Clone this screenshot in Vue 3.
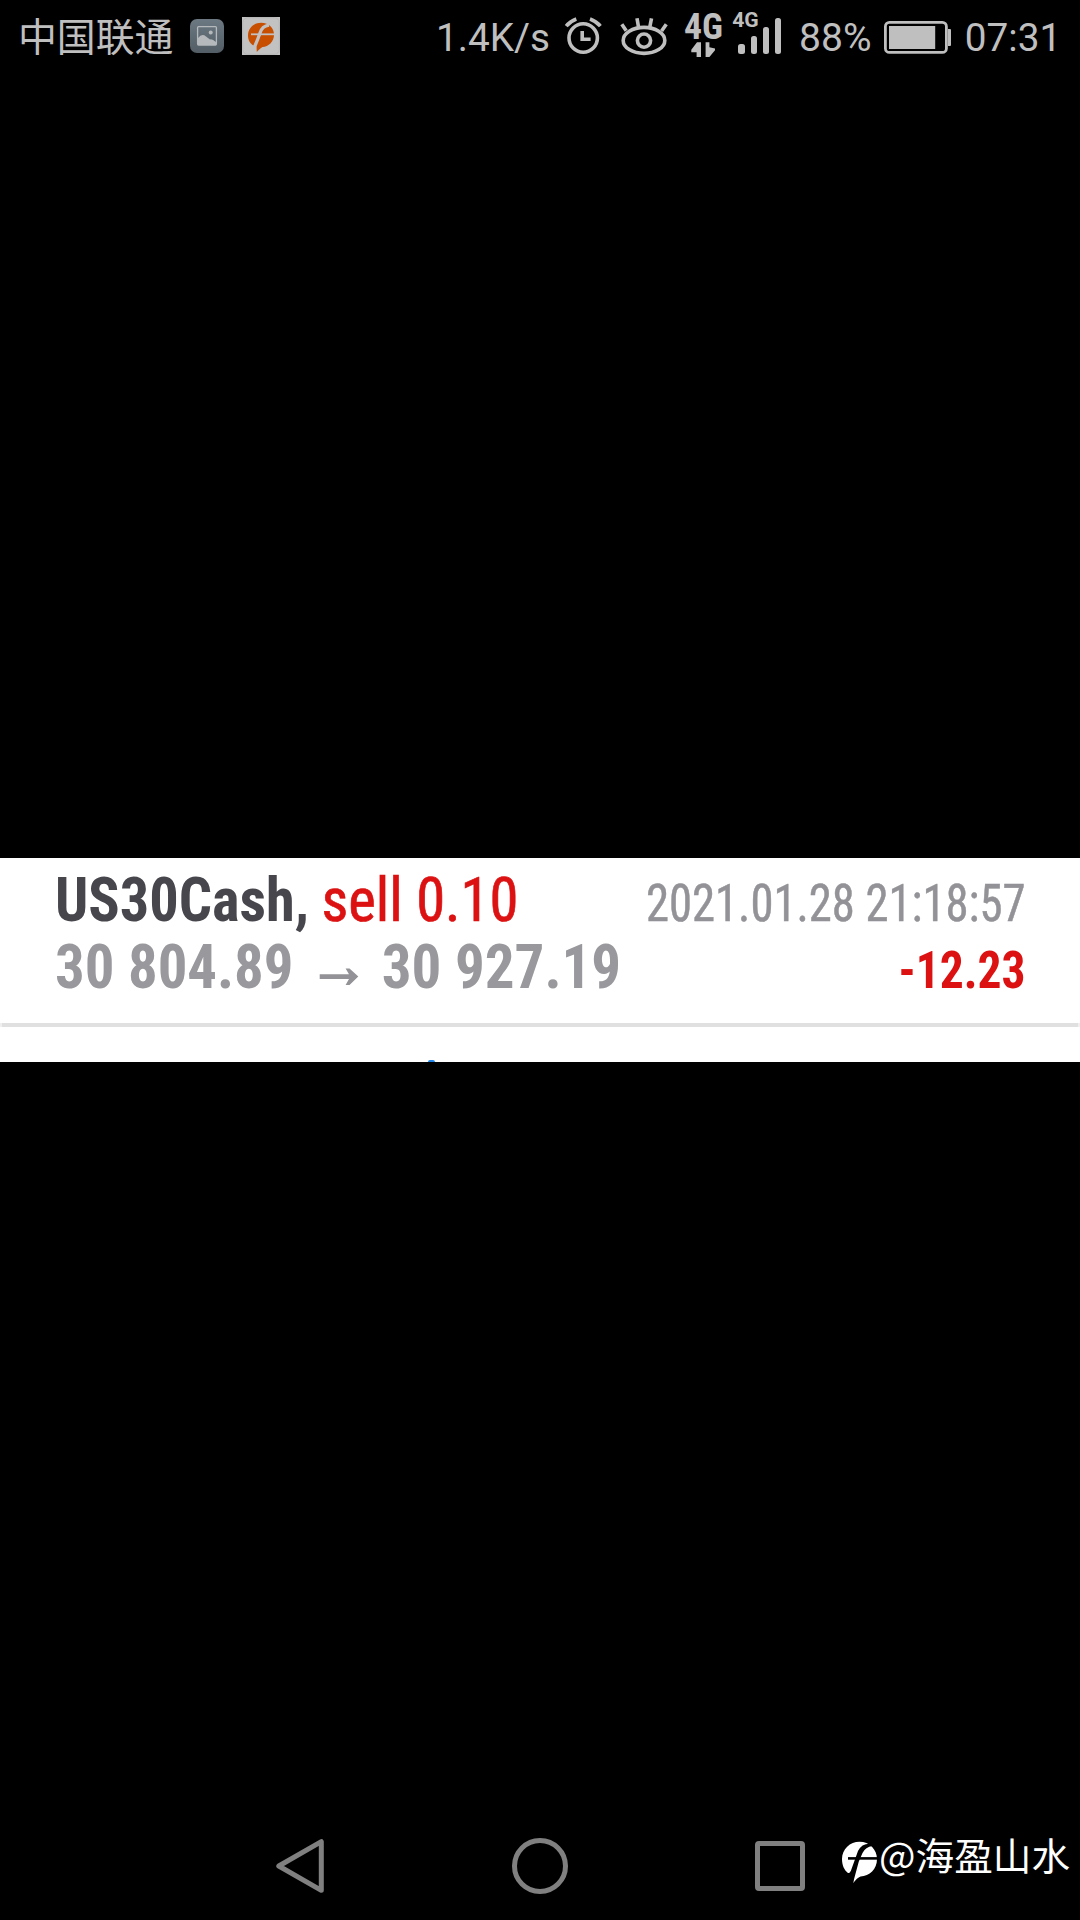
<script setup>
	import { ref } from 'vue';

	const carrier = ref('中国联通');
	const speed = ref('1.4K/s');
	const battery = ref(88);
	const time = ref('07:31');

	const deal = ref({
		symbol: 'US30Cash,',
		action: 'sell 0.10',
		openPrice: '30 804.89',
		closePrice: '30 927.19',
		date: '2021.01.28 21:18:57',
		profit: '-12.23',
	});

	const author = ref('@海盈山水');
</script>

<template>
	<div class="screen">
		<header class="status-bar">
			<div class="status-left">
				<svg class="cjk" width="180" height="75" viewBox="0 0 180 75">
					<text x="18" y="51" font-size="38.8" textLength="155.5" lengthAdjust="spacingAndGlyphs">{{ carrier }}</text>
				</svg>
				<svg width="50" height="75" viewBox="180 0 50 75">
					<defs>
						<linearGradient id="gallery" x1="0" y1="0" x2="0" y2="1">
							<stop offset="0" stop-color="#6c7982" />
							<stop offset="1" stop-color="#525d65" />
						</linearGradient>
					</defs>
					<rect x="190" y="19" width="34" height="34" rx="7" fill="url(#gallery)" />
					<rect x="197.6" y="26.6" width="18.8" height="18.4" rx="1" fill="none" stroke="#b5b9bc" stroke-width="1.3" />
					<circle cx="210.7" cy="32.4" r="2" fill="#b5b9bc" />
					<path d="M198 38Q202 33 206 36.5L210 39.5Q212 38.5 216 42V45H198Z" fill="#b5b9bc" />
				</svg>
				<svg width="60" height="75" viewBox="230 0 60 75">
					<rect x="242" y="17" width="38" height="38" fill="#c2c2c2" />
					<rect x="242.7" y="17.7" width="36.6" height="36.6" rx="5" fill="none" stroke="#adadad" stroke-width=".6" />
					<path d="M248 35.5C248 28 254 22.8 261 22.8C269 22.8 274 28.5 274 34.5C274 42 268.5 46.5 262.5 47C260.5 48 258.5 50 256.8 52L256.5 46.5C251 45.5 248 41 248 35.5Z" fill="#c84e00" />
					<path d="M254.5 47Q258 39 259.8 33.5Q262 26 269 25.2" fill="none" stroke="#c2c2c2" stroke-width="3.3" />
					<path d="M251 34.3H275" stroke="#c2c2c2" stroke-width="1.8" />
				</svg>
			</div>
			<div class="status-right">
				<svg width="130" height="75" viewBox="425 0 130 75">
					<text x="436" y="51" font-size="39" textLength="114" lengthAdjust="spacingAndGlyphs">{{ speed }}</text>
				</svg>
				<svg width="55" height="75" viewBox="555 0 55 75" class="line-icon">
					<circle cx="583.2" cy="38" r="14.2" />
					<path d="M582.2 31V39.2H590.6" />
					<path d="M566.2 26.2Q570 21.3 576.3 19M590 19Q596.5 21.3 600.4 26.2" />
				</svg>
				<svg width="70" height="75" viewBox="610 0 70 75" class="line-icon">
					<ellipse cx="644" cy="40.4" rx="20.8" ry="13" />
					<circle cx="644" cy="40.6" r="6.6" />
					<path d="M621.8 24.2L626.2 30.8M637 18.3L638.5 27M651.5 18.3L649.8 27M666.3 24.2L661.6 31" />
				</svg>
				<svg width="110" height="75" viewBox="680 0 110 75">
					<text class="condensed bold" x="684" y="39" font-size="37" textLength="39" lengthAdjust="spacingAndGlyphs">4G</text>
					<path d="M701 42.3H697L691.3 49.8V52.2H696.6V57H701ZM705.6 42.3H709.4V47.3L715 48.5V50.3L709.4 57H705.6Z" />
					<text class="bold" x="732.2" y="26.8" font-size="20" textLength="26.5" lengthAdjust="spacingAndGlyphs">4G</text>
					<rect x="738" y="44" width="7" height="10" rx="2.5" />
					<rect x="751" y="36" width="6" height="18" rx="2.5" />
					<rect x="763" y="27" width="6" height="27" rx="2.5" />
					<rect x="775" y="18" width="6" height="36" rx="2.5" />
				</svg>
				<svg width="85" height="75" viewBox="790 0 85 75">
					<text x="799" y="51" font-size="39" textLength="72.5" lengthAdjust="spacingAndGlyphs">{{ battery }}%</text>
				</svg>
				<svg width="80" height="75" viewBox="875 0 80 75">
					<rect x="885.4" y="22.4" width="61" height="30" rx="4" fill="none" stroke="#bfbfbf" stroke-width="2.8" />
					<rect x="889" y="26" :width="battery * 0.525" height="23" />
					<path d="M948 29H950Q951 29 951 30V45Q951 46 950 46H948Z" />
				</svg>
				<svg width="125" height="75" viewBox="955 0 125 75">
					<text x="964.7" y="51" font-size="39" textLength="96.5" lengthAdjust="spacingAndGlyphs">{{ time }}</text>
				</svg>
			</div>
		</header>

		<main class="viewer">
			<section class="deal">
				<div class="deal-row">
					<svg class="condensed" width="600" height="75" viewBox="0 858 600 75">
						<text class="symbol" x="55" y="921" font-size="62" textLength="254" lengthAdjust="spacingAndGlyphs">{{ deal.symbol }}</text>
						<text class="action" x="321.5" y="921" font-size="62" textLength="197" lengthAdjust="spacingAndGlyphs">{{ deal.action }}</text>
					</svg>
					<svg class="condensed" width="480" height="75" viewBox="600 858 480 75">
						<text class="muted" x="646" y="921" font-size="51" textLength="379.5" lengthAdjust="spacingAndGlyphs">{{ deal.date }}</text>
					</svg>
				</div>
				<div class="deal-row">
					<svg class="condensed" width="700" height="90" viewBox="0 933 700 90">
						<text class="price" x="55" y="988" font-size="62" textLength="238.5" lengthAdjust="spacingAndGlyphs">{{ deal.openPrice }}</text>
						<path d="M319.7 974.3H349L345.6 968.4H349.5L358.3 976.6L349.5 985H345.6L349 979H319.7Z" fill="#929297" />
						<text class="price" x="381.7" y="988" font-size="62" textLength="239.5" lengthAdjust="spacingAndGlyphs">{{ deal.closePrice }}</text>
					</svg>
					<svg class="condensed" width="380" height="90" viewBox="700 933 380 90">
						<text class="profit" x="898.5" y="988" font-size="51" textLength="127" lengthAdjust="spacingAndGlyphs">{{ deal.profit }}</text>
					</svg>
				</div>
				<div class="divider"></div>
				<div class="next-row"><span class="next-mark"></span></div>
			</section>
		</main>

		<footer class="nav-bar">
			<svg width="820" height="100" viewBox="0 1820 820 100" class="nav-icons">
				<path d="M278.8 1866L321.3 1841.7V1890.3Z" />
				<circle cx="540" cy="1866" r="25.5" />
				<rect x="757.5" y="1843.5" width="45" height="45" rx="1.5" />
			</svg>
			<svg width="260" height="100" viewBox="820 1820 260 100" class="cjk author">
				<path d="M842 1859C842 1849 850 1841.7 859.5 1841.7C869.5 1841.7 877 1849.5 877 1859C877 1869.5 869.5 1876 860.5 1876.6Q857 1878 853.2 1883L854 1873H848C844 1870 842 1865 842 1859Z" />
				<path d="M872 1843.8Q862 1842.5 858 1851L850.8 1871L847 1876L853 1883L858.8 1861.5L862.5 1853Q865.5 1846.8 872.5 1846Z" fill="#000" />
				<path d="M848 1858.4H878" stroke="#000" stroke-width="2.6" />
				<text x="879" y="1870" font-size="38" textLength="191" lengthAdjust="spacingAndGlyphs">{{ author }}</text>
			</svg>
		</footer>
	</div>
</template>

<style>
	body {
		margin: 0;
		background: #000;
	}
</style>

<style scoped>
	.screen {
		width: 1080px;
		height: 1920px;
		display: flex;
		flex-direction: column;
		background: #000;
		font-family: Roboto, "Noto Sans CJK SC", sans-serif;
		overflow: hidden;
	}

	svg {
		display: block;
		flex: none;
		overflow: visible;
	}

	.status-bar {
		height: 75px;
		display: flex;
		justify-content: space-between;
		fill: #bfbfbf;
	}

	.status-left,
	.status-right,
	.deal-row,
	.nav-bar {
		display: flex;
	}

	.cjk {
		font-family: "Noto Sans CJK SC", sans-serif;
		font-weight: 400;
	}

	.condensed {
		font-family: "Roboto Condensed", Roboto, sans-serif;
		font-stretch: 75%;
	}

	.bold {
		font-weight: 700;
	}

	.line-icon {
		fill: none;
		stroke: #bfbfbf;
		stroke-width: 3.6;
	}

	.viewer {
		flex: 1;
		padding-top: 783px;
	}

	.deal {
		height: 204px;
		background: #fff;
	}

	.symbol {
		fill: #47464d;
		font-weight: 700;
	}

	.action {
		fill: #dc1111;
		stroke: #dc1111;
		stroke-width: 0.7;
	}

	.muted {
		fill: #929297;
		stroke: #929297;
		stroke-width: 0.5;
	}

	.price {
		fill: #98989d;
		font-weight: 700;
	}

	.profit {
		fill: #dc1111;
		font-weight: 700;
	}

	.divider {
		height: 4px;
		border: solid #efefef;
		border-width: 0 2px;
		background: #e0e0e0;
		background-clip: padding-box;
	}

	.next-row {
		height: 35px;
		display: flex;
		align-items: flex-end;
		padding-left: 428px;
	}

	.next-mark {
		width: 7px;
		height: 2px;
		border-radius: 3px 3px 0 0;
		background: #2185e8;
	}

	.nav-bar {
		height: 100px;
	}

	.nav-icons {
		fill: none;
		stroke: #808080;
		stroke-width: 5;
		stroke-linejoin: round;
	}

	.author {
		fill: #fff;
	}
</style>
